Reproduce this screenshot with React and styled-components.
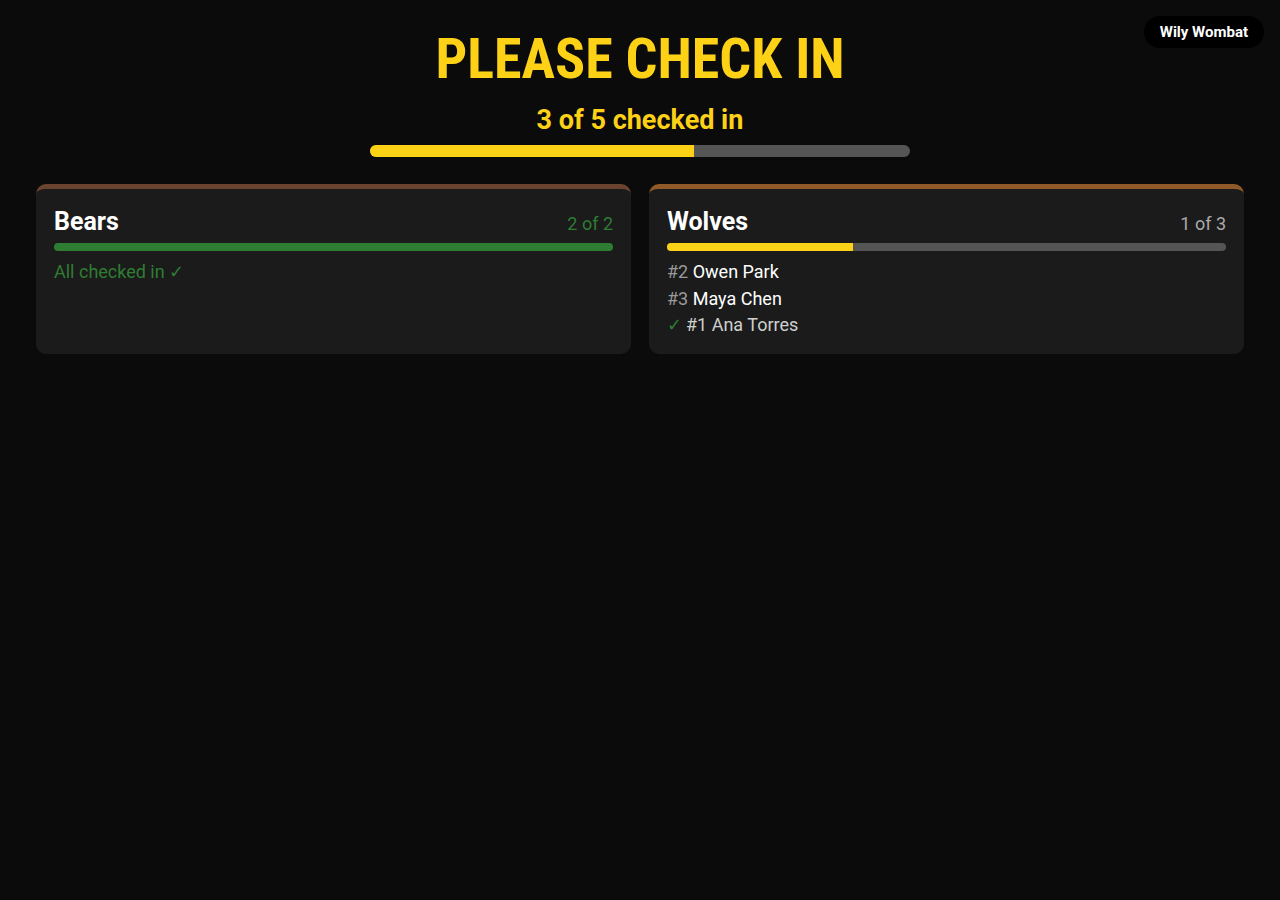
import React from "react";
import styled, { createGlobalStyle } from "styled-components";

const Global = createGlobalStyle`
  html, body {
    margin: 0;
    padding: 0;
    background: #0b0b0b;
    color: #fff;
    font-family: Roboto, "Liberation Sans", sans-serif;
  }
`;

const Page = styled.div`
  min-height: 900px;
  padding: 24px 36px;
  box-sizing: border-box;
`;

const Badge = styled.div`
  position: fixed;
  top: 16px;
  right: 16px;
  background: #000;
  color: #fff;
  font-weight: 700;
  font-size: 15px;
  line-height: 18px;
  padding: 7px 16px;
  border-radius: 16px;
`;

const Header = styled.header`
  display: flex;
  flex-direction: column;
  align-items: center;
`;

const Title = styled.h1`
  margin: 0;
  font-family: "Roboto Condensed", "Liberation Sans Narrow", Roboto, sans-serif;
  font-stretch: condensed;
  font-weight: 700;
  font-size: 56px;
  letter-spacing: 0;
  line-height: 70px;
  color: #fdd116;
`;

const Summary = styled.div`
  margin-top: 11px;
  font-size: 27px;
  font-weight: 700;
  color: #fdd116;
  line-height: 30px;
`;

const Track = styled.div`
  width: ${(p) => p.$width || "100%"};
  height: ${(p) => p.$h}px;
  border-radius: ${(p) => p.$h / 2}px;
  background: #555;
  overflow: hidden;
  margin-top: ${(p) => p.$mt || 0}px;
`;

const Fill = styled.div`
  height: 100%;
  background: ${(p) => p.$color};
`;

const Grid = styled.div`
  display: grid;
  grid-template-columns: 1fr 1fr;
  gap: 18px;
  margin-top: 27px;
`;

const Card = styled.section`
  background: #1b1b1b;
  border-top: 5px solid ${(p) => p.$accent};
  border-radius: 10px;
  padding: 17px 18px 15px;
`;

const CardHead = styled.div`
  display: flex;
  justify-content: space-between;
  align-items: baseline;
`;

const Name = styled.h2`
  margin: 0;
  font-size: 25px;
  font-weight: 700;
  color: #fff;
  line-height: 32px;
`;

const Count = styled.span`
  font-size: 18px;
  color: ${(p) => (p.$done ? "#2e7d32" : "#aaa")};
`;

const List = styled.ul`
  list-style: none;
  margin: 8px 0 0;
  padding: 0;
  font-size: 18px;
  line-height: 26.5px;
`;

const Item = styled.li`
  color: ${(p) => (p.$checked ? "#cfcfcf" : "#fff")};
`;

const Num = styled.span`
  color: #9a9a9a;
`;

const Check = styled.span`
  color: #2e7d32;
  margin-right: 4px;
`;

const Done = styled.div`
  margin-top: 8px;
  font-size: 18px;
  line-height: 26.5px;
  color: #2e7d32;
`;

const teams = [
  {
    name: "Bears",
    accent: "#6a432e",
    players: [
      { num: 4, name: "Sam Lee", in: true },
      { num: 7, name: "Jo Kim", in: true },
    ],
  },
  {
    name: "Wolves",
    accent: "#8f5a27",
    players: [
      { num: 2, name: "Owen Park", in: false },
      { num: 3, name: "Maya Chen", in: false },
      { num: 1, name: "Ana Torres", in: true },
    ],
  },
];

function TeamCard({ team }) {
  const total = team.players.length;
  const done = team.players.filter((p) => p.in).length;
  const all = done === total;
  const pending = team.players.filter((p) => !p.in);
  const checked = team.players.filter((p) => p.in);
  return (
    <Card $accent={team.accent}>
      <CardHead>
        <Name>{team.name}</Name>
        <Count $done={all}>
          {done} of {total}
        </Count>
      </CardHead>
      <Track $h={8} $mt={5}>
        <Fill
          $color={all ? "#2e7d32" : "#fdd116"}
          style={{ width: `${(done / total) * 100}%` }}
        />
      </Track>
      {all ? (
        <Done>All checked in ✓</Done>
      ) : (
        <List>
          {pending.map((p) => (
            <Item key={p.num}>
              <Num>#{p.num}</Num> {p.name}
            </Item>
          ))}
          {checked.map((p) => (
            <Item key={p.num} $checked>
              <Check>✓</Check>#{p.num} {p.name}
            </Item>
          ))}
        </List>
      )}
    </Card>
  );
}

export default function App() {
  const total = teams.reduce((n, t) => n + t.players.length, 0);
  const done = teams.reduce((n, t) => n + t.players.filter((p) => p.in).length, 0);
  return (
    <Page>
      <Global />
      <Badge>Wily Wombat</Badge>
      <Header>
        <Title>PLEASE CHECK IN</Title>
        <Summary>
          {done} of {total} checked in
        </Summary>
        <Track $width="540px" $h={12} $mt={10}>
          <Fill $color="#fdd116" style={{ width: `${(done / total) * 100}%` }} />
        </Track>
      </Header>
      <Grid>
        {teams.map((t) => (
          <TeamCard key={t.name} team={t} />
        ))}
      </Grid>
    </Page>
  );
}
